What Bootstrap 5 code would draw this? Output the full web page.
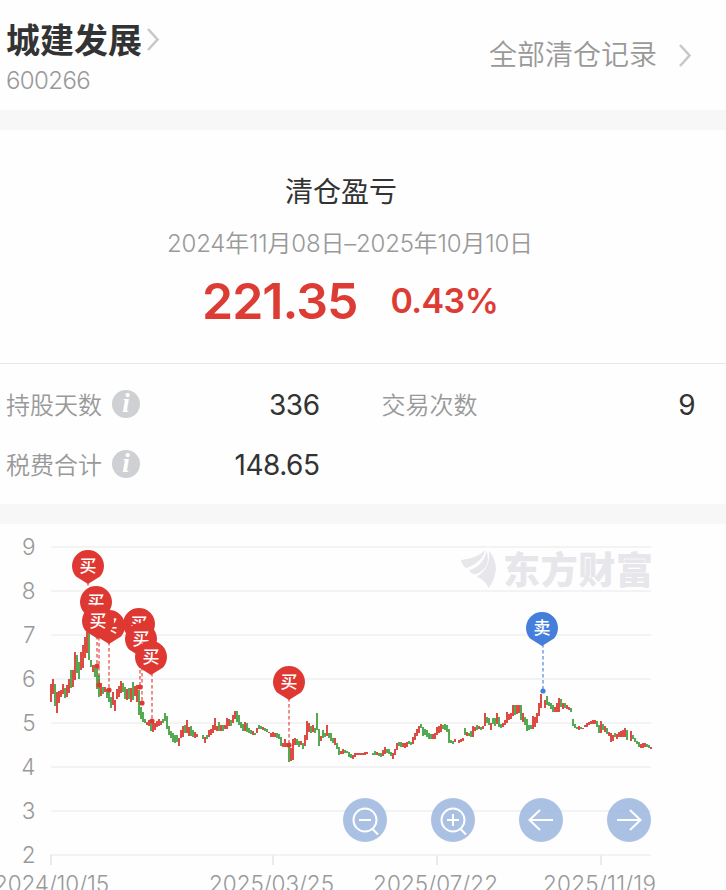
<!DOCTYPE html>
<html lang="zh-CN">
<head>
<meta charset="utf-8">
<meta name="viewport" content="width=device-width, initial-scale=1">
<title>城建发展 600266</title>
<link href="https://cdn.jsdelivr.net/npm/bootstrap@5.3.0/dist/css/bootstrap.min.css" rel="stylesheet">
<style>
body { font-family: Inter, "Noto Sans CJK SC", sans-serif; color: #333; background: #fefefe; overflow: hidden; }
.muted { color: #999; font-weight: 350; }
.head { height: 110px; padding: 20px 34px 0 6px; }
.stock-name { font-size: 34px; line-height: 42px; font-weight: 700; }
.stock-code { font-size: 24px; line-height: 38px; letter-spacing: -.6px; }
.all-link { font-size: 28px; line-height: 40px; margin-top: 15px; gap: 21px; }
.chev { fill: none; stroke: #c8c8c8; stroke-width: 2.6; }
.band { height: 20px; background: #f7f7f7; }
.summary { height: 234px; border-bottom: 1px solid #e8e8e8; padding-top: 41px; }
.sum-title { font-size: 28px; line-height: 42px; padding-right: 44px; }
.sum-dates { font-size: 24px; line-height: 36px; margin-top: 13px; padding-right: 26px; letter-spacing: -.2px; }
.sum-values { color: #dc3c34; font-weight: 600; line-height: 60px; margin-top: 9px; padding-left: 202px; gap: 33px; }
.gain { font-size: 50px; letter-spacing: -1px; }
.rate { font-size: 34px; letter-spacing: -.6px; }
.stats { height: 140px; padding: 11px 31px 9px 6px; }
.stat-line { height: 60px; }
.stat-label { font-size: 24px; padding-top: 1px; }
.stat-value { font-size: 28px; font-weight: 400; letter-spacing: -.5px; }
.stat-left { width: 313.5px; }
.stat-right { width: 313.5px; margin-left: 62px; }
.info { width: 28px; height: 28px; background: #cfd0d4; color: #fff; font: italic bold 27px/27px "Liberation Serif", serif; margin-left: 10px; margin-top: -2px; }
.chart { height: 366px; }
.chart text { font-family: Inter, "Noto Sans CJK SC", sans-serif; }
.axis { fill: #999; font-size: 22.5px; font-weight: 350; }
</style>
<script src="https://cdn.jsdelivr.net/npm/bootstrap@5.3.0/dist/js/bootstrap.bundle.min.js"></script>
</head>
<body>
<header class="head d-flex justify-content-between align-items-start">
  <div>
    <div class="d-flex align-items-center">
      <span class="stock-name">城建发展</span>
      <svg class="chev ms-1 mb-1" width="16" height="26"><path d="M2 3l9.500 10.500L2 24"/></svg>
    </div>
    <div class="stock-code muted">600266</div>
  </div>
  <div class="all-link muted d-flex align-items-center">全部清仓记录
    <svg class="chev" width="14" height="26"><path d="M2 3l9.500 10.500L2 24"/></svg>
  </div>
</header>
<div class="band"></div>
<section class="summary">
  <div class="sum-title text-center">清仓盈亏</div>
  <div class="sum-dates muted text-center">2024年11月08日–2025年10月10日</div>
  <div class="sum-values d-flex align-items-center"><span class="gain">221.35</span><span class="rate">0.43%</span></div>
</section>
<section class="stats">
  <div class="stat-line d-flex align-items-center">
    <div class="stat-left d-flex align-items-center">
      <span class="stat-label muted">持股天数</span><span class="info rounded-circle text-center">i</span>
      <span class="stat-value ms-auto">336</span>
    </div>
    <div class="stat-right d-flex align-items-center">
      <span class="stat-label muted">交易次数</span><span class="stat-value ms-auto">9</span>
    </div>
  </div>
  <div class="stat-line d-flex align-items-center">
    <div class="stat-left d-flex align-items-center">
      <span class="stat-label muted">税费合计</span><span class="info rounded-circle text-center">i</span>
      <span class="stat-value ms-auto">148.65</span>
    </div>
  </div>
</section>
<div class="band"></div>
<section class="chart">
<svg class="d-block" width="726" height="366" viewBox="0 524 726 366">
  <path d="M51 547H651M51 591H651M51 635H651M51 679H651M51 723H651M51 767H651M51 811H651M50 855H651" stroke="#f3f3f4" stroke-width="2"/>
  <path d="M51 855v10M273 855v10M437 855v10M601 855v10" stroke="#ebebeb" stroke-width="2"/>
  <g class="axis" text-anchor="end">
    <text x="35.500" y="555">9</text><text x="35.500" y="599">8</text><text x="35.500" y="643">7</text><text x="35.500" y="687">6</text>
    <text x="35.500" y="731">5</text><text x="35.500" y="775">4</text><text x="35.500" y="819">3</text><text x="35.500" y="863">2</text>
  </g>
  <g class="axis">
    <text x="-6" y="891.500" textLength="115">2024/10/15</text><text x="209" y="891.500" textLength="125">2025/03/25</text>
    <text x="373" y="891.500" textLength="125">2025/07/22</text><text x="543" y="891.500" textLength="113">2025/11/19</text>
  </g>
  <g fill="#e6e6eb">
    <path d="M461 560Q478 558 485 550Q483 562 466 568Q462 565 461 560Z"/>
    <path d="M486.500 550Q492 568 475 574Q471 573 469 570Q484 565 486.500 550Z" transform="translate(0 .5)"/>
    <path d="M489 550.500Q496 560 496 569Q494 582 488.500 588Q486 581 477 576.500Q491 568 489 550.500Z"/>
    <text x="503" y="583.500" font-size="37" font-weight="900" textLength="150">东方财富</text>
  </g>
  <g id="candles" shape-rendering="crispEdges"></g>
  <g id="trades"></g>
  <g transform="translate(365 820)"><circle r="22" fill="#96b2dc" fill-opacity=".8"/><g fill="none" stroke="#fff" stroke-width="2"><circle r="11.500"/><path d="M-6 0H6M7.500 9L13 14.500"/></g></g>
  <g transform="translate(453 820)"><circle r="22" fill="#96b2dc" fill-opacity=".8"/><g fill="none" stroke="#fff" stroke-width="2"><circle r="11.500"/><path d="M-6 0H6M0-6V6M7.500 9L13 14.500"/></g></g>
  <g transform="translate(541 820)"><circle r="22" fill="#96b2dc" fill-opacity=".8"/><path d="M12 0H-11M-1-10L-11.500 0L-1 10" fill="none" stroke="#fff" stroke-width="2"/></g>
  <g transform="translate(629 820)"><circle r="22" fill="#96b2dc" fill-opacity=".8"/><path d="M-12 0H11M1-10L11.500 0L1 10" fill="none" stroke="#fff" stroke-width="2"/></g>
</svg>
</section>
<script>
// Each run: starting x, then candles spaced 2px apart as colour + top-bottom.
const runs = `51 r684-702 r679-694 g684-706 r692-713 r691-703 r690-697 r684-694 g688-698 r685-697 r679-693 g670-688 r670-687 r652-680 g655-673 g662-679 r652-670 r645-668 r637-658 r632-653 g628-660 g660-667 r665-672 g665-677 g668-689 g675-697 r683-696 g687-694 r687-692 g689-698 g690-702 g697-708 r692-705 r700-711
117 r689-699 r686-697 r681-693 g683-692 g687-699 r689-700 g688-699 r688-702 g682-700 r686-696 r685-702 g690-715 g707-719 g712-722 g719-723 r722-725 r720-726 g720-731 r722-732 r723-730 r721-727 r719-726 r721-725 g719-723 g713-721 g716-729 g726-735 g731-738 g733-742 g735-743 g735-742 r738-746 r730-738 r726-737 g725-733 r720-733 r727-736 g726-736 g730-737 r732-738 r734-737
203 g735-739 r737-743 g735-739 r730-737 r729-735 r725-733 r718-730 r726-731 g722-731 r725-731 g725-731 r725-729 r718-729 r719-726 g720-726 r715-723 r711-719 g711-722 g715-725 g722-728 g724-731 r722-731 g723-732 g728-733 g730-734 r731-735 g733-735 r728-733 g725-729 g726-729 r727-730 g728-731 g729-732 r732-733 r733-737 r732-737 r733-737 g733-738 g734-739 g737-746 r743-747 r739-747 r743-747 g747-762 r748-761 r739-760 r738-745 g739-745 g741-747 r741-745 g743-749 r735-746 r721-740 r723-732 g726-733 r725-732 g728-733 g713-730 g729-746 r736-741 g730-738 g733-737 r725-736 g733-738 g733-741 g738-743 r738-745 g743-749 g747-755 r751-754 r749-754 g750-753 g751-753 g752-757 g754-758 r755-759 r753-757 r753-755 r753-755 r753-755 r753-755 r752-755 r752-754
373 g753-755 g751-755 r752-755 g753-756 g753-757 r750-756 r747-754 g749-753 g749-754 g752-756 r753-759 r749-755 r743-750 g742-746 g742-747 r743-747 r743-748 r742-747 g741-744 g742-745 r737-744 r733-740 r729-736 r726-733 g724-728 g727-736 g729-735 g730-737 g733-739 g734-739 r734-739 r733-739 r727-735 r726-733 r724-732 g725-729 g724-730 g725-732 g729-743 g740-743 g741-744 r739-742
459 r740-743 r739-742 r738-741 g728-735 r732-736 g733-736 g731-737 r726-737 r727-731 g725-730 r726-729 g727-730 r726-729 r713-726 g717-723 g718-725 r723-730 g718-724 g718-726 r713-724 g717-727 g724-728 r723-727 r720-725 r712-723 r714-720 r713-719 r705-716 g705-715 r705-714 r705-713 g705-720 r713-722 g717-725 g719-731 g725-730 g725-729 r716-729 r717-727 r713-723 r703-716 r694-708
545 r700-708 g696-705 g702-706 g703-709 g705-712 r707-712 r703-712 r698-712 g699-707 r703-709 g703-708 r705-709 r707-710 g708-712 g719-726 g724-728 g727-729 r726-730 g727-729 r728-729 r725-727 r723-727 r722-725 r721-724 r720-724 r720-724 g721-727 g725-733 r721-733 g724-730 r726-732 g728-734 r732-736 r733-742 r735-741 g733-737 r734-739 r732-737 r731-737 r730-737 r728-737 g730-740
631 r731-741 g735-739 g738-742 g741-744 g742-747 r744-748 r743-748 r743-747 g744-747 g745-748 r747-749`;
let candles = "";
for (const run of runs.split("\n")) {
  const parts = run.split(" ");
  parts.slice(1).forEach((c, i) => {
    const [top, bottom] = c.slice(1).split("-").map(Number);
    candles += `<rect x="${+parts[0] + i * 2 - 1}" y="${top}" width="2" height="${bottom - top}" fill="${c[0] === "r" ? "#dd4c42" : "#53aa53"}"/>`;
  });
}
document.getElementById("candles").innerHTML = candles;

// Trade markers: balloon centre, dot position, label, colour.
const trades = [
  [88, 566, 88, 588, "买", "#df3832"], [96, 602, 97, 666, "买", "#df3832"],
  [109, 626, 109, 690, "买", "#df3832"], [98, 621, 99, 685, "买", "#df3832"],
  [139, 624, 140, 687, "买", "#df3832"], [141, 639, 142, 703, "买", "#df3832"],
  [151, 657, 152, 721, "买", "#df3832"], [289, 682, 289, 745, "买", "#df3832"],
  [542, 628, 543, 691, "卖", "#467fdb"]];
document.getElementById("trades").innerHTML =
  trades.map(([x, y, dx, dy, , c], i) => `<path d="M${dx} ${y + 16}V${dy}" stroke="${c}" stroke-opacity=".75" stroke-width="1.500" stroke-dasharray="3.500 2.500"/>` + (i ? `<circle cx="${dx}" cy="${dy}" r="2.600" fill="${c}"/>` : "")).join("") +
  trades.map(([x, y, , , t, c]) => `<g transform="translate(${x} ${y})"><path d="M-12 10.600A16 16 0 1 1 12 10.600Q5 15 0 18Q-5 15-12 10.600Z" fill="${c}"/><text y="6" text-anchor="middle" font-size="17" font-weight="500" fill="#fff">${t}</text></g>`).join("");
</script>
</body>
</html>
